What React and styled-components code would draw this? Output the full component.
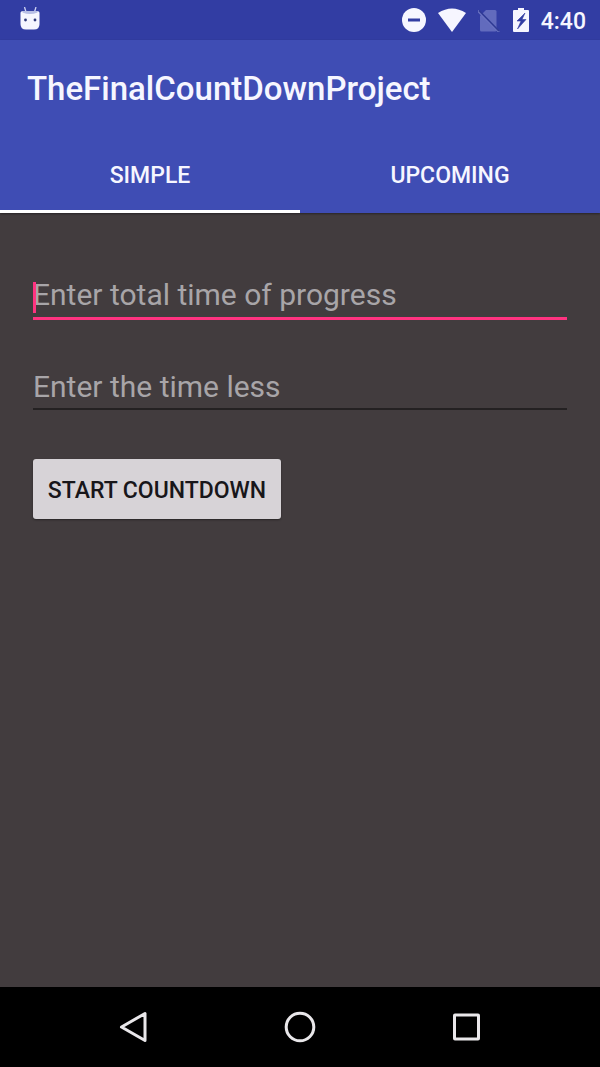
import React, { Component } from 'react';
import styled, { createGlobalStyle } from 'styled-components';

const GlobalStyle = createGlobalStyle`
  * {
    box-sizing: border-box;
  }

  body {
    margin: 0;
    background-color: #423c3e;
    font-family: Roboto, sans-serif;
  }
`;

const Screen = styled.div`
  display: flex;
  flex-direction: column;
  min-height: 100vh;
  background-color: #423c3e;
`;

const StatusBar = styled.div`
  display: flex;
  align-items: center;
  justify-content: space-between;
  height: 40px;
  padding: 0 14px 0 18px;
  background-color: #323da3;
  color: #f6f6ff;
`;

const StatusIcons = styled.div`
  display: flex;
  align-items: center;
  gap: 12px;
`;

const Clock = styled.span`
  padding-top: 3px;
  font-size: 23px;
  font-weight: 500;
  line-height: 37px;
`;

const AppBar = styled.header`
  background-color: #3f4db4;
  color: #f6f6ff;
  box-shadow: 0 1px 2px rgba(0, 0, 0, 0.4);
`;

const Title = styled.h1`
  margin: 0;
  padding: 4px 27px 0;
  font-size: 33px;
  font-weight: 500;
  line-height: 89px;
`;

const Tabs = styled.nav`
  display: grid;
  grid-template-columns: 1fr 1fr;
`;

const Tab = styled.button`
  height: 80px;
  padding: 7px 0 0;
  border: 0;
  border-bottom: 3px solid ${props => (props.$active ? 'white' : 'transparent')};
  background: none;
  color: inherit;
  font-family: inherit;
  font-size: 23px;
  font-weight: 500;
  text-transform: uppercase;
`;

const Form = styled.form`
  display: flex;
  flex: 1;
  flex-direction: column;
  align-items: flex-start;
  gap: 49px;
  padding: 64px 33px;
`;

const Field = styled.div`
  position: relative;
  width: 100%;
`;

const Cursor = styled.span`
  position: absolute;
  top: 5px;
  left: 0;
  width: 3px;
  height: 31px;
  background-color: #ff3380;
`;

const TimeInput = styled.input`
  display: block;
  width: 100%;
  height: ${props => (props.$active ? '43px' : '41px')};
  padding: 0 0 5px;
  border: 0;
  border-bottom: ${props => (props.$active ? '3px solid #ff3380' : '2px solid #242122')};
  outline: none;
  background: none;
  color: white;
  font-family: inherit;
  font-size: 30px;
  line-height: 35px;

  &::placeholder {
    color: #a8a5a8;
    opacity: 1;
  }
`;

const StartButton = styled.button`
  min-width: 248px;
  height: 60px;
  padding: 2px 14px 0;
  border: 0;
  border-radius: 3px;
  background-color: #d7d3d7;
  box-shadow: 0 1px 2px rgba(0, 0, 0, 0.4);
  color: #18161a;
  font-family: inherit;
  font-size: 23px;
  font-weight: 500;
  text-transform: uppercase;
`;

const NavBar = styled.nav`
  display: flex;
  height: 80px;
  padding: 0 50px;
  background-color: black;
`;

const NavButton = styled.button`
  display: flex;
  flex: 1;
  align-items: center;
  justify-content: center;
  padding: 0;
  border: 0;
  background: none;
  color: #e9e7ea;
`;

const AndroidIcon = () => (
  <svg width="24" height="26" viewBox="0 0 24 26">
    <path d="M6.500 0l1.500 5M18 0l-1.500 5" stroke="#cfd3f3" strokeWidth="1.300" />
    <path d="M2.500 6q0-2 3-2h13q3 0 3 2v11q0 5.500-5.500 5.500H8q-5.500 0-5.500-5.500z" fill="#f6f6ff" />
    <path d="M4.500 4h15v1.500q-7.500 3-15 0z" fill="#b8bfe6" />
    <circle cx="7.500" cy="13" r="1.400" fill="#303a7a" />
    <circle cx="17" cy="13" r="1.400" fill="#303a7a" />
  </svg>
);

const DoNotDisturbIcon = () => (
  <svg width="24" height="24" viewBox="0 0 24 24">
    <circle cx="12" cy="12" r="12" fill="currentColor" />
    <path d="M6 12h12" stroke="#323da3" strokeWidth="3" />
  </svg>
);

const WifiIcon = () => (
  <svg width="28" height="24" viewBox="0 0 28 24">
    <path d="M0 5Q14-4 28 5L14 24z" fill="currentColor" />
  </svg>
);

const NoSimIcon = () => (
  <svg width="23" height="24" viewBox="0 0 23 24">
    <path d="M8 2h9q1.500 0 1.500 1.500V22q0 1.500-1.500 1.500H3.500Q2 23.500 2 22V8z" fill="#626bbd" />
    <path d="M-1 2l22 22" stroke="#6b74c2" strokeWidth="2" />
    <path d="M1 2.500l20 20.500" stroke="#2f3a94" strokeWidth="1.600" />
  </svg>
);

const BatteryIcon = () => (
  <svg width="16" height="26" viewBox="0 0 16 26">
    <path d="M0 4q0-1 1-1h4V1h6v2h4q1 0 1 1v20q0 1-1 1H1q-1 0-1-1z" fill="currentColor" />
    <path d="M12 6L4 14h4l-3.500 8L13 12.500H9z" fill="#323da3" stroke="#323da3" strokeWidth="0.600" />
  </svg>
);

const BackIcon = () => (
  <svg width="34" height="34" viewBox="0 0 34 34" fill="none" stroke="currentColor" strokeWidth="3">
    <path d="M29 3.500v27L5.500 17z" strokeLinejoin="round" />
  </svg>
);

const HomeIcon = () => (
  <svg width="34" height="34" viewBox="0 0 34 34" fill="none" stroke="currentColor" strokeWidth="3">
    <circle cx="17" cy="17" r="13.800" />
  </svg>
);

const RecentIcon = () => (
  <svg width="34" height="34" viewBox="0 0 34 34" fill="none" stroke="currentColor" strokeWidth="3">
    <rect x="4.500" y="5" width="24" height="24" rx="0.500" />
  </svg>
);

export default class App extends Component {
  state = { tab: 'simple', total: '', less: '' };

  selectTab = (tab) => this.setState({ tab });

  onSubmit = (event) => {
    event.preventDefault();
  }

  render() {
    const { tab, total, less } = this.state;

    return (
      <Screen>
        <GlobalStyle />
        <StatusBar>
          <AndroidIcon />
          <StatusIcons>
            <DoNotDisturbIcon />
            <WifiIcon />
            <NoSimIcon />
            <BatteryIcon />
            <Clock>4:40</Clock>
          </StatusIcons>
        </StatusBar>
        <AppBar>
          <Title>TheFinalCountDownProject</Title>
          <Tabs>
            <Tab $active={tab === 'simple'} onClick={() => this.selectTab('simple')}>Simple</Tab>
            <Tab $active={tab === 'upcoming'} onClick={() => this.selectTab('upcoming')}>Upcoming</Tab>
          </Tabs>
        </AppBar>
        <Form onSubmit={this.onSubmit}>
          <Field>
            <TimeInput
              $active
              aria-label="Enter total time of progress"
              placeholder="Enter total time of progress"
              value={total}
              onChange={(e) => this.setState({ total: e.target.value })}
            />
            {total === '' && <Cursor />}
          </Field>
          <Field>
            <TimeInput
              aria-label="Enter the time less"
              placeholder="Enter the time less"
              value={less}
              onChange={(e) => this.setState({ less: e.target.value })}
            />
          </Field>
          <StartButton type="submit">Start Countdown</StartButton>
        </Form>
        <NavBar>
          <NavButton type="button" aria-label="Back"><BackIcon /></NavButton>
          <NavButton type="button" aria-label="Home"><HomeIcon /></NavButton>
          <NavButton type="button" aria-label="Recent apps"><RecentIcon /></NavButton>
        </NavBar>
      </Screen>
    );
  }
}
